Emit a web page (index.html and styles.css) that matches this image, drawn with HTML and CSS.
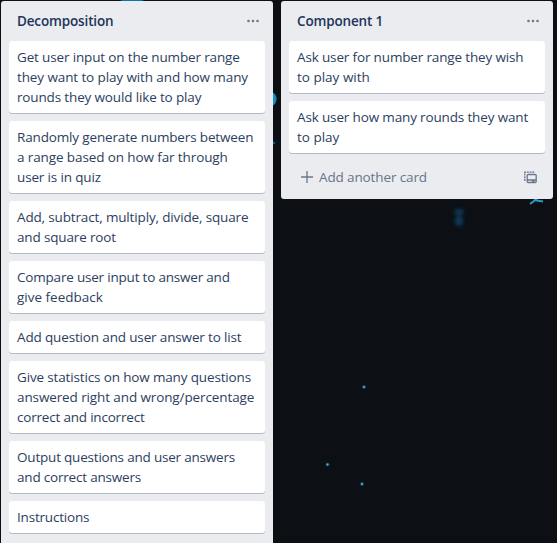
FILE: index.html
```html
<!DOCTYPE html>
<html lang="en">
<head>
<meta charset="utf-8">
<title>Board</title>
<link rel="stylesheet" href="styles.css">
</head>
<body>
<svg class="backdrop" width="557" height="543" viewBox="0 0 557 543" aria-hidden="true">
  <defs><filter id="soft" x="-50%" y="-50%" width="200%" height="200%"><feGaussianBlur stdDeviation="0.6"/></filter>
  <filter id="haze" x="-100%" y="-100%" width="300%" height="300%"><feGaussianBlur stdDeviation="2.2"/></filter></defs>
  <ellipse cx="132" cy="-1" rx="13" ry="3" fill="#0878a8"/>
  <ellipse cx="272" cy="99" rx="4.500" ry="6.500" fill="#168fc4" filter="url(#soft)"/>
  <circle cx="274" cy="143" r="1.300" fill="#0c5878"/>
  <g filter="url(#haze)" fill="#0b3c5e"><ellipse cx="459" cy="212" rx="5" ry="3"/><ellipse cx="459" cy="221" rx="4" ry="5"/></g>
  <path d="M530 204l4-3 3-3M534 200l9 1.500" fill="none" stroke="#2c9cc0" stroke-width="1.800" filter="url(#soft)"/>
  <g fill="#0b4867"><circle cx="364" cy="387" r="2"/><circle cx="327.500" cy="464.500" r="2"/><circle cx="362" cy="484" r="2"/></g>
  <g fill="#72aebb"><circle cx="364" cy="387" r="1"/><circle cx="327.500" cy="464.500" r="1"/><circle cx="362" cy="484" r="1"/></g>
</svg>
<main class="board">
  <section class="list list-long">
    <header class="list-header"><h2>Decomposition</h2><svg class="dots" width="12" height="4" viewBox="0 0 12 4"><circle cx="1.500" cy="2" r="1.300"/><circle cx="6" cy="2" r="1.300"/><circle cx="10.500" cy="2" r="1.300"/></svg></header>
    <div class="cards">
      <article class="card">Get user input on the number range<br><span class="loose">they want to play with and how many</span><br>rounds they would like to play</article>
      <article class="card">Randomly generate numbers between<br><span class="loose">a range based on how far through</span><br>user is in quiz</article>
      <article class="card">Add, subtract, multiply, divide, square<br>and square root</article>
      <article class="card"><span class="tight">Compare user input to answer and</span><br><span class="wide">give feedback</span></article>
      <article class="card">Add question and user answer to list</article>
      <article class="card">Give statistics on how many questions<br><span class="loose">answered right and wrong/percentage</span><br><span class="tight">correct and incorrect</span></article>
      <article class="card"><span class="tight">Output questions and user answers</span><br><span class="tight">and correct answers</span></article>
      <article class="card"><span class="tight">Instructions</span></article>
    </div>
  </section>
  <section class="list">
    <header class="list-header"><h2>Component 1</h2><svg class="dots" width="12" height="4" viewBox="0 0 12 4"><circle cx="1.500" cy="2" r="1.300"/><circle cx="6" cy="2" r="1.300"/><circle cx="10.500" cy="2" r="1.300"/></svg></header>
    <div class="cards">
      <article class="card">Ask user for number range they wish<br><span class="wide">to play with</span></article>
      <article class="card">Ask user how many rounds they want<br><span class="wide">to play</span></article>
    </div>
    <footer class="list-footer">
      <svg class="plus" width="12" height="12" viewBox="0 0 12 12"><path d="M6 0v12M0 6h12"/></svg>
      <span class="add">Add another card</span>
      <svg class="template" width="13" height="13" viewBox="0 0 13 13"><path d="M.8 10V1.200h10" stroke-dasharray="2 .7"/><rect x="3.200" y="3.500" width="9" height="8" rx="1"/><path d="M3 9h9M8 10.300h2.500"/></svg>
    </footer>
  </section>
</main>
</body>
</html>
```
FILE: styles.css
```css
* { box-sizing: border-box; }

body {
  margin: 0;
  height: 543px;
  overflow: hidden;
  background: #0c0f14;
  color: #172b4d;
  font: 13.5px/20px "Open Sans", "Noto Sans", sans-serif;
}

.backdrop { position: absolute; inset: 0; }

.board {
  position: relative;
  display: flex;
  align-items: flex-start;
  gap: 8px;
  height: 543px;
  padding: 1px 0 0 1px;
}

.list {
  flex: 0 0 272px;
  background: #ebecf0;
  border-radius: 3px;
}

.list-long { height: 550px; }

.list-header {
  display: flex;
  align-items: center;
  justify-content: space-between;
  height: 40px;
  padding: 0 14px 0 16px;
}

h2 {
  margin: 0;
  color: #20345a;
  font-size: 13.5px;
  line-height: 20px;
  font-weight: 600;
  letter-spacing: -0.15px;
}

.dots { fill: #6b778c; }

.cards {
  display: flex;
  flex-direction: column;
  gap: 8px;
  padding: 0 8px;
}

.card {
  padding: 6px 0 6px 8px;
  background: #fff;
  border-radius: 3px;
  box-shadow: 0 1px 0 #b3bac5;
  color: #2c3e60;
  letter-spacing: -0.15px;
  white-space: nowrap;
}

.loose { letter-spacing: -0.11px; }
.wide { letter-spacing: 0; }
.tight { letter-spacing: -0.2px; }

.list-footer {
  display: flex;
  align-items: center;
  height: 46px;
  padding: 2px 16px 0 20px;
  color: #67748b;
}

.add {
  margin-left: 6px;
  letter-spacing: -0.12px;
}

.plus, .template {
  fill: none;
  stroke: #6b778c;
  stroke-width: 1.3;
}

.template { margin-left: auto; }
```
